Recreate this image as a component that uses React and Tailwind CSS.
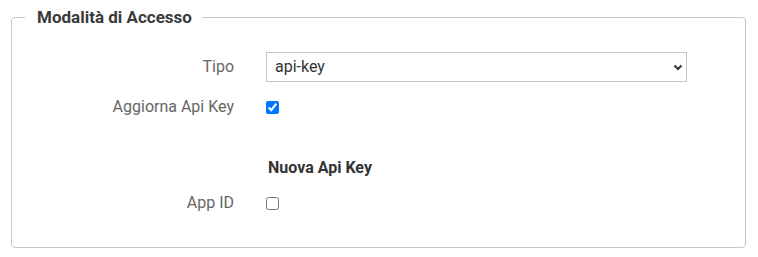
export default function App() {
  return (
    <div className="w-[758px] h-[257px] bg-white pt-[5px] pl-[11px] font-['Roboto',sans-serif]">
      <fieldset className="w-[735px] h-[243px] border border-[#c6c6c6] rounded-[4px] px-0 pt-0 m-0">
        <legend className="ml-[13px] pl-[12px] pr-[10px] text-[17px] leading-[24px] font-bold text-[#3a3a3a]">
          Modalità di Accesso
        </legend>
        <div className="grid grid-cols-[222px_421px] gap-x-8 mt-[23px] items-center">
          <div className="h-[30px] flex items-center justify-end text-[16px] text-[#666]">Tipo</div>
          <div className="relative h-[30px]">
            <select className="w-full h-[30px] appearance-none border border-[#c6c6c6] bg-white pl-[8px] text-[16px] text-[#333] outline-none">
              <option>api-key</option>
            </select>
            <svg className="absolute right-[4px] top-[12px] pointer-events-none" width="10" height="7" viewBox="0 0 10 7">
              <path d="M1.5 1.5 L5 5 L8.5 1.5" fill="none" stroke="#333" strokeWidth="2" />
            </svg>
          </div>

          <div className="mt-[10px] h-[30px] flex items-center justify-end text-[16px] text-[#666]">Aggiorna Api Key</div>
          <div className="mt-[10px] h-[30px] flex items-center">
            <input type="checkbox" defaultChecked className="w-[13px] h-[13px]" />
          </div>

          <div className="mt-[31px] h-[30px]"></div>
          <div className="mt-[31px] h-[30px] flex items-center pl-[2px] text-[16px] font-bold text-[#333]">Nuova Api Key</div>

          <div className="mt-[5px] h-[30px] flex items-center justify-end text-[16px] text-[#666]">App ID</div>
          <div className="mt-[5px] h-[30px] flex items-center">
            <input type="checkbox" className="w-[13px] h-[13px]" />
          </div>
        </div>
      </fieldset>
    </div>
  );
}
